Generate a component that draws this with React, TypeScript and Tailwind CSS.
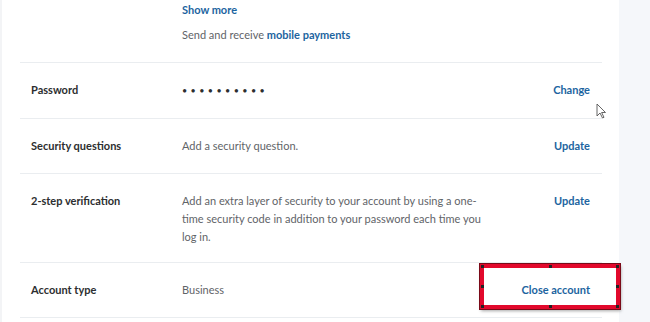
import React from 'react';

const link = 'font-bold text-[#1c64a0]';

interface RowProps {
    label: string;
    children: React.ReactNode;
    action?: string;
    className?: string;
}

const Row = ({ label, children, action, className = 'pb-[18px]' }: RowProps) => (
    <div className={`flex border-b border-[#eaedf0] pt-[18px] pl-[11px] pr-[12px] ${className}`}>
        <div className="w-[151px] shrink-0 font-bold text-[#2c2e2f]">{label}</div>
        <div className="flex-1 text-[#5f6468]">{children}</div>
        {action && <div className={`${link} shrink-0`}>{action}</div>}
    </div>
);

const Cursor = () => (
    <svg width="10" height="16" viewBox="0 0 10 16" className="absolute left-[594px] top-[103px]">
        <path d="M1 1 L1 13 L4 10 L6.5 15 L8 14.3 L5.6 9.5 L9.5 9.5 Z" fill="#fff" stroke="#555" strokeWidth="0.9" strokeLinejoin="round" />
    </svg>
);

const Handle = ({ className }: { className: string }) => (
    <span className={`absolute h-[3px] w-[3px] bg-[#222] ${className}`} />
);

export default function App() {
    return (
        <div
            className="flex h-[322px] w-[650px] overflow-hidden bg-[#f5f7fa] text-[11px] leading-[18px]"
            style={{ fontFamily: 'Lato, "Noto Sans", sans-serif' }}
        >
            <div className="relative h-full w-[619px] shrink-0 border-l-2 border-[#f3f4f6] bg-white pl-[18px] pr-[17px]">
                <div className="border-b border-[#eaedf0] pt-[1px] pb-[18px] pl-[162px]">
                    <div className={link}>Show more</div>
                    <div className="mt-[7px] text-[#5f6468]">
                        Send and receive <span className={link}>mobile payments</span>
                    </div>
                </div>
                <Row label="Password" action="Change">
                    <span className="tracking-[3.4px] text-[#2c2e2f] text-[9px]">••••••••••</span>
                </Row>
                <Row label="Security questions" action="Update">
                    Add a security question.
                </Row>
                <Row label="2-step verification" action="Update" className="pb-[16px]">
                    <span className="block">Add an extra layer of security to your account by using a one-</span>
                    <span className="block">time security code in addition to your password each time you</span>
                    <span className="block">log in.</span>
                </Row>
                <Row label="Account type" action="Close account">
                    Business
                </Row>

                <Cursor />

                <div className="absolute left-[478px] top-[264px] h-[45px] w-[140px] border-[4px] border-[#e2092c] shadow-[1px_2px_3px_rgba(0,0,0,0.35)] outline outline-1 outline-[#7a0a18]">
                    <Handle className="-left-[3px] -top-[3px]" />
                    <Handle className="left-[65px] -top-[3px]" />
                    <Handle className="-right-[3px] -top-[3px]" />
                    <Handle className="-left-[3px] top-[17px]" />
                    <Handle className="-right-[3px] top-[17px]" />
                    <Handle className="-left-[3px] -bottom-[3px]" />
                    <Handle className="left-[65px] -bottom-[3px]" />
                    <Handle className="-right-[3px] -bottom-[3px]" />
                </div>
            </div>
        </div>
    );
}
